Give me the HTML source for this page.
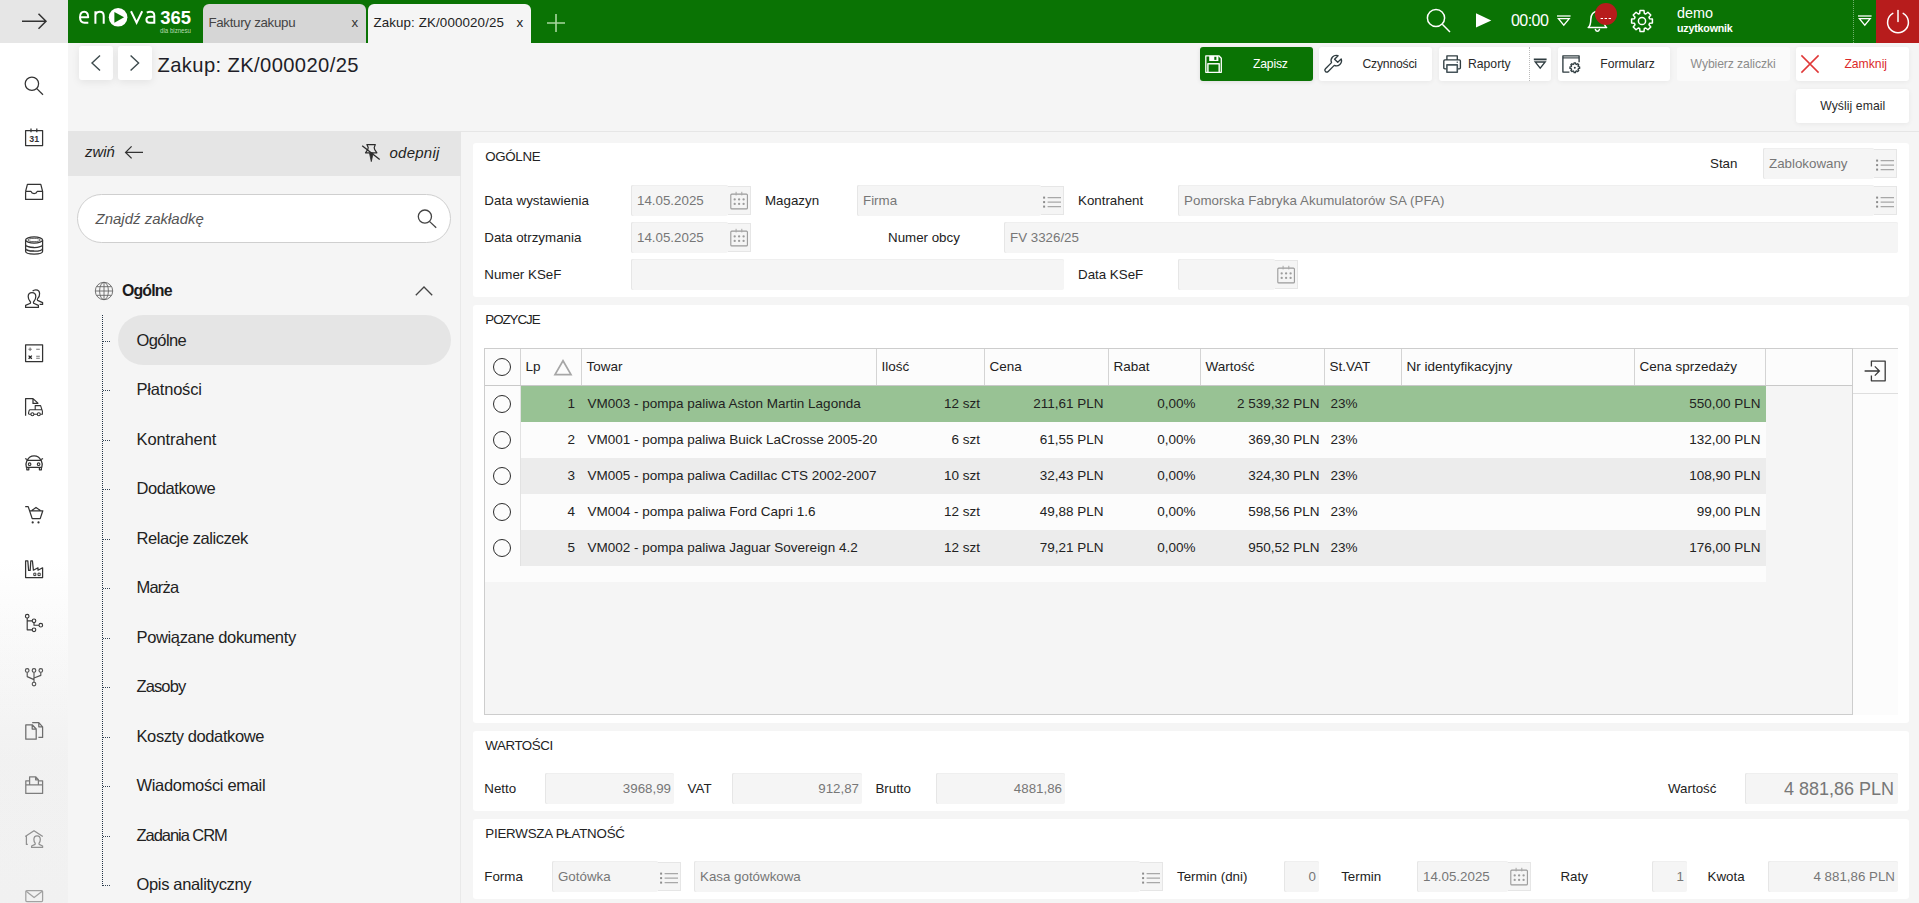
<!DOCTYPE html>
<html lang="pl">
<head>
<meta charset="utf-8">
<title>Zakup: ZK/000020/25</title>
<style>
html,body{margin:0;padding:0}
body{width:1919px;height:903px;overflow:hidden;position:relative;background:#f5f5f5;font-family:"Liberation Sans",sans-serif;font-size:13.33px;color:#222}
.a{position:absolute}
.t{position:absolute;white-space:nowrap;line-height:1}
svg{position:absolute;overflow:visible}
.ic{fill:none;stroke:#3a3a3a;stroke-width:1.4;stroke-linecap:round;stroke-linejoin:round}
/* sidebar */
#sb{left:0;top:0;width:68px;height:903px;background:linear-gradient(#fff 0,#fff 560px,#f1f1f1 760px,#f0f0f0 903px)}
#sbtop{left:0;top:0;width:68px;height:43px;background:#e6e6e6}
#sbfade{left:0;top:600px;width:68px;height:303px;background:linear-gradient(rgba(245,245,245,0),rgba(243,243,243,.35))}
/* top bar */
#bar{left:68px;top:0;width:1851px;height:43px;background:#0a7304}
.tab{top:4px;height:39px;border-radius:6px 6px 0 0}
.tab .t{top:11.8px}
#pwr{left:1876px;top:0;width:43px;height:43px;background:#b71c1c}
/* toolbar */
.btn{top:47px;width:113px;height:34px;background:#fff;border-radius:3px;box-shadow:0 1px 5px rgba(0,0,0,.06)}
.btn .t{font-size:13px;top:10px;color:#2a2a2a}
.nb{top:46px;width:34px;height:34px;background:#fff;border-radius:3px;box-shadow:0 2px 8px rgba(0,0,0,.08)}
/* left panel */
.ni{left:136.5px;font-size:16px;color:#222}
.tick{left:103px;width:7px;height:0;border-top:1px dotted #345}
/* cards */
.card{background:#fff;border-radius:3px;left:473px;width:1436px}
.h{left:485.3px;color:#222}
.l{font-size:13.33px;color:#222}
.f{background:#f5f5f5;height:31px;border-radius:2px;box-shadow:inset 1px 0 0 #e6e6e6,inset 0 1px 0 #efefef;box-sizing:border-box}
.f .t{top:8.6px;left:6px;color:#777;font-size:13.33px}
.f .r{left:auto;right:3px}
.fb{height:29px;width:23px;background:#f5f5f5;border:1px solid #e6e6e6;border-left:none;box-sizing:border-box}
.circ{left:493px;width:18px;height:18px;box-sizing:border-box;border:1.5px solid #2c2c2c;border-radius:50%;background:#fcfcfc}
</style>
</head>
<body>
<!-- SIDEBAR -->
<div id="sb" class="a"></div>
<div id="sbtop" class="a"></div>
<svg style="left:22px;top:12px" width="26" height="18" viewBox="0 0 26 18"><path d="M0 9.3H24M16.5 1.8L24 9.3L16.5 16.8" fill="none" stroke="#333" stroke-width="1.5"/></svg>
<svg style="left:0;top:0" width="68" height="903" viewBox="0 0 68 903"><g class="ic" style="stroke:#333;stroke-width:1.25;stroke-linecap:butt">
<!-- search --><circle cx="31.9" cy="83.7" r="6.7"/><path d="M36.8 88.6L43 94.8"/>
<!-- calendar --><path d="M25.6 130.6H42.6V145.6H25.6Z"/><path d="M31 128.4V132.2M36.8 128.4V132.2"/>
<!-- inbox --><path d="M25.6 191.4L27.4 184.4H40.8L42.6 191.4V199.4H25.6V191.4H31C31.4 192.8 32.4 193.6 34.1 193.6C35.8 193.6 36.8 192.8 37.2 191.4H42.6"/>
<!-- coins --><ellipse cx="34.1" cy="240" rx="8.5" ry="3.1"/><ellipse cx="34.1" cy="240" rx="6.2" ry="1.7" stroke-width=".8"/><path d="M25.6 240V244.4C25.6 246.2 29.4 247.6 34.1 247.6C38.8 247.6 42.6 246.2 42.6 244.4V240M25.6 244.4V248.2C25.6 250 29.4 251.2 34.1 251.2C38.8 251.2 42.6 250 42.6 248.2V244.4M25.6 248.2V251.2C25.6 253 29.4 254 34.1 254C38.8 254 42.6 253 42.6 251.2V248.2"/><path d="M27 246.2C29 247 31.4 247.2 34.1 247.2M27 249.8C29 250.6 31.4 250.8 34.1 250.8" stroke-width=".7"/>
<!-- people --><path d="M25.6 307.4V305.4L30.4 303.2C30.8 302.4 30.6 301.8 30 301.2C28.8 300 28.2 298.4 28.2 296.6C28.2 294 29.8 292.6 32 292.6C34.2 292.6 35.8 294 35.8 296.6C35.8 298.4 35.2 300 34 301.2C33.4 301.8 33.2 302.4 33.6 303.2L38.4 305.4V307.4Z"/><path d="M32.6 291.2C33.4 290.2 34.6 289.8 35.8 289.8C38.2 289.8 39.6 291.4 39.6 293.8C39.6 295.6 39 297.2 37.8 298.4C37.2 299 37.2 299.8 37.6 300.4L42.6 302.6V304.4H39.6"/>
<!-- calculator --><path d="M25.6 344.8H42.6V361.6H25.6Z"/>
<path d="M28.4 349.2H31.8M30.1 347.5V350.9M36.2 349.2H39.8M36.2 356.2H39.8M36.2 358.2H39.8" stroke="#777" stroke-width="1.1"/><path d="M28.6 355.6L31.8 358.8M31.8 355.6L28.6 358.8" stroke="#222" stroke-width="1.3"/>
<!-- doc truck --><path d="M25.6 415.8V398.6H33L38.2 403.4M33 398.6V403.4H38.4"/><path d="M35.2 409.8V405.6H40.6L42.4 411.2V414.2H40.4M37.2 414.2H34M30.8 414.2H29.2C28.6 414.2 28.4 413.6 28.6 413L29 410.8C29.2 410.2 29.6 409.8 30.2 409.8H42" stroke-width="1.1"/><circle cx="32.4" cy="414.2" r="1.5" stroke-width="1.1"/><circle cx="38.8" cy="414.2" r="1.5" stroke-width="1.1"/>
<!-- car --><path d="M27.4 460.2C28.6 457.2 30.6 455.9 34.1 455.9C37.6 455.9 39.6 457.2 40.8 460.2M26.4 467.4C26 466 26 462.4 27 460.4H41.2C42.2 462.4 42.2 466 41.8 467.4Z M26.8 467.4V469.8H28.8V467.4M39.4 467.4V469.8H41.4V467.4M25.2 458.4L27 459.6M43 458.4L41.2 459.6"/><circle cx="29.6" cy="464.2" r="1.3" stroke-width="1.1"/><circle cx="38.6" cy="464.2" r="1.3" stroke-width="1.1"/>
<!-- cart --><path d="M25.2 506.6H28.2L32.2 518.6H40.2L42.8 510.8H30M31.8 510.6L36 507.4L40.4 510.6"/><circle cx="32.7" cy="522.4" r="1.1" fill="#333" stroke="none"/><circle cx="38.5" cy="522.4" r="1.1" fill="#333" stroke="none"/>
<!-- factory --><path d="M25.6 577.6V560.8H27.8L28.6 570.4H30.2L30.8 560.8H32.4L33.4 570.2L38 567.8V570.2L42.6 567.8V577.6Z"/><path d="M33.8 573.2H35.8V575.6H33.8ZM38 573.2H40.2V575.6H38Z" stroke-width="1"/>
<!-- tree --><g stroke-width="1.15"><circle cx="27.2" cy="616.2" r="1.8"/><circle cx="34" cy="620.8" r="1.8"/><circle cx="40.8" cy="625.2" r="1.8"/><circle cx="34" cy="629.8" r="1.8"/><path d="M27.2 618V629.8H32.2M27.2 620.8H32.2M34 622.6V625.2H39"/></g>
<!-- merge --><g stroke-width="1.15" stroke="#444"><circle cx="27.2" cy="670.4" r="1.8"/><circle cx="34" cy="670.4" r="1.8"/><circle cx="40.8" cy="670.4" r="1.8"/><circle cx="34" cy="684" r="1.8"/><path d="M27.2 672.2V676.6L34 679.6M40.8 672.2V675.4L34 678M34 672.2V682.2"/></g>
<!-- copy --><g stroke="#555"><path d="M25.8 724.8H32.2L36.2 729V739.2H25.8ZM32.2 724.8V729H36.2"/><path d="M32.2 722.6H38.8L42.6 726.8V737.4H38.4M38.8 722.6V726.8H42.6"/></g>
<!-- box --><g stroke="#5c5c5c"><path d="M29.6 780.8H25.8V793.4H42.6V780.8H38.4M25.8 784.8H42.6M29.6 784.6V776.8H35.6L38.4 779.8V784.6M35.6 776.8V779.8H38.4"/></g>
<!-- house --><g stroke="#6a6a6a"><path d="M25.2 836.6L34 830.8L42.8 836.6M26.4 836V844.4H27.8"/><path d="M31.6 847.4V846L35 844.4C35.4 843.8 35.4 843.4 35 842.8C34.2 841.8 33.9 840.6 33.9 839.4C33.9 837.2 35.2 835.8 37.1 835.8C39 835.8 40.3 837.2 40.3 839.4C40.3 840.6 40 841.8 39.2 842.8C38.8 843.4 38.8 843.8 39.2 844.4L42.6 846V847.4Z"/></g>
<!-- mail --><g stroke="#777"><rect x="25.8" y="890.6" width="16.8" height="11" rx="1"/><path d="M26.2 891.2L34.1 897.6L42.2 891.2"/></g>
</g>
<text x="29.3" y="142.2" font-family="Liberation Sans" font-weight="700" font-size="9.4" fill="#333" textLength="9.8" lengthAdjust="spacingAndGlyphs">31</text>
</svg>

<div id="sbfade" class="a"></div>
<!-- TOP BAR -->
<div id="bar" class="a"></div>
<svg style="left:68px;top:0" width="135" height="43" viewBox="68 0 135 43">
 <g fill="none" stroke="#fff" stroke-width="2" stroke-linejoin="round" stroke-linecap="butt">
  <path d="M80.2 17.2H88.2C88.2 13.6 86.8 11.7 84.2 11.7C81.4 11.7 80 13.9 80 17.2C80 20.7 81.4 22.7 84.6 22.7H88.3"/>
  <path d="M95.4 23.7V11.2M95.4 14.6C96.4 12.6 97.9 11.7 99.8 11.7C102.4 11.7 103.7 13.2 103.7 16V23.7"/>
  <path d="M131 11.2L136.6 22.8L142.2 11.2" stroke-linejoin="miter"/>
  <path d="M146.8 12.6C147.8 12 149.2 11.7 150.4 11.7C153 11.7 154.3 13 154.3 15.6V23.7M154.3 16.8H150.6C147.8 16.8 146.4 17.8 146.4 19.8C146.4 21.7 147.6 22.7 149.6 22.7H154.3"/>
 </g>
 <circle cx="118.1" cy="17.3" r="9.3" fill="#fff"/>
 <path d="M114.4 11.9V22.7L124.1 17.3Z" fill="#0a7304"/>
 <text x="160.2" y="23.6" font-family="Liberation Sans" font-weight="700" font-size="17.8" fill="#fff" textLength="30.8" lengthAdjust="spacingAndGlyphs">365</text>
 <text x="160" y="32.8" font-family="Liberation Sans" font-size="6.4" fill="#b9dcb3" textLength="31" lengthAdjust="spacingAndGlyphs">dla biznesu</text>
</svg>

<div class="a tab" style="left:203px;width:163px;background:#d6d6d6"><span class="t" style="left:5.4px;color:#444;font-size:13.33px;letter-spacing:-.3px">Faktury zakupu</span><span class="t" style="left:148.5px;color:#333;font-size:13.33px">x</span></div>
<div class="a tab" style="left:368px;width:163px;background:#f5f5f5"><span class="t" style="left:5.4px;color:#222;font-size:13.33px;letter-spacing:.13px">Zakup: ZK/000020/25</span><span class="t" style="left:148.5px;color:#222;font-size:13.33px">x</span></div>
<svg style="left:546px;top:13px" width="20" height="20" viewBox="0 0 20 20"><path d="M10 1V19M1 10H19" stroke="#a9d7a0" stroke-width="1.6" fill="none"/></svg>

<svg style="left:1424px;top:6px" width="30" height="30" viewBox="1424 6 30 30"><g fill="none" stroke="#fff" stroke-width="1.5"><circle cx="1436" cy="18" r="8.6"/><path d="M1442.3 24.3L1450 32"/></g></svg>
<svg style="left:1476px;top:13px" width="16" height="15" viewBox="0 0 16 15"><path d="M0 .3V14.5L15.3 7.4Z" fill="#fff"/></svg>
<span class="t" style="left:1511px;top:12.5px;font-size:16px;color:#fff;letter-spacing:-.55px">00:00</span>
<svg style="left:1556px;top:15px" width="16" height="12" viewBox="0 0 16 12"><g fill="none" stroke="#fff" stroke-width="1.3"><path d="M1 1H14.6"/><path d="M2.4 3.6H13.2L7.8 10.2Z" stroke-linejoin="miter"/></g></svg>
<svg style="left:1585px;top:6px" width="26" height="28" viewBox="1585 6 26 28"><g fill="none" stroke="#fff" stroke-width="1.5" stroke-linejoin="round" stroke-linecap="round"><path d="M1588.2 27.6C1590.6 25.6 1590.8 23.4 1590.8 19.4C1590.8 14.4 1593.4 11.2 1597.4 11.2C1601.4 11.2 1604 14.4 1604 19.4C1604 23.4 1604.2 25.6 1606.6 27.6Z"/><path d="M1595.4 29.4C1595.8 30.6 1596.5 31.2 1597.4 31.2C1598.3 31.2 1599 30.6 1599.4 29.4"/></g></svg>
<div class="a" style="left:1595px;top:3px;width:22px;height:22px;border-radius:11px;background:#b71c1c"></div>
<svg style="left:1600px;top:17px" width="12" height="3" viewBox="0 0 12 3"><path d="M.6 1.5H3M4.6 1.5H7M8.6 1.5H11" stroke="#fff" stroke-width="1.1"/></svg>
<svg style="left:1630px;top:9px" width="24" height="24" viewBox="-12 -12 24 24"><g fill="none" stroke="#fff" stroke-width="1.5" stroke-linejoin="round"><path d="M-2.33 -7.55L-2.00 -10.41L2.00 -10.41L2.33 -7.55L3.69 -6.99L5.94 -8.78L8.78 -5.94L6.99 -3.69L7.55 -2.33L10.41 -2.00L10.41 2.00L7.55 2.33L6.99 3.69L8.78 5.94L5.94 8.78L3.69 6.99L2.33 7.55L2.00 10.41L-2.00 10.41L-2.33 7.55L-3.69 6.99L-5.94 8.78L-8.78 5.94L-6.99 3.69L-7.55 2.33L-10.41 2.00L-10.41 -2.00L-7.55 -2.33L-6.99 -3.69L-8.78 -5.94L-5.94 -8.78L-3.69 -6.99Z"/><circle r="3.6"/></g></svg>
<span class="t" style="left:1677px;top:6px;font-size:14.4px;color:#fff">demo</span>
<span class="t" style="left:1677px;top:22.5px;font-size:10.7px;font-weight:700;color:#fff;letter-spacing:-.2px">uzytkownik</span>
<div class="a" style="left:1853px;top:0;width:0;height:43px;border-left:1px dotted #6fb06b"></div>
<svg style="left:1857px;top:15px" width="16" height="12" viewBox="0 0 16 12"><g fill="none" stroke="#fff" stroke-width="1.3"><path d="M1 1H14.6"/><path d="M2.4 3.6H13.2L7.8 10.2Z"/></g></svg>

<div id="pwr" class="a"></div>
<svg style="left:1886px;top:10px" width="24" height="24" viewBox="-12 -12 24 24"><g fill="none" stroke="#fff" stroke-width="1.5" stroke-linecap="round"><path d="M-5.2 -8.6A10.4 10.4 0 1 0 5.2 -8.6"/><path d="M0 -11.5V-0.5"/></g></svg>

<!-- TOOLBAR -->
<div class="a nb" style="left:79px"></div><div class="a nb" style="left:118px"></div>
<svg style="left:90px;top:54px" width="12" height="18" viewBox="0 0 12 18"><path d="M10 1.4L2 9L10 16.6" fill="none" stroke="#3d4a4d" stroke-width="1.4"/></svg>
<svg style="left:129px;top:54px" width="12" height="18" viewBox="0 0 12 18"><path d="M1.6 1.4L9.6 9L1.6 16.6" fill="none" stroke="#3d4a4d" stroke-width="1.4"/></svg>
<span class="t" style="left:157.5px;top:54.6px;font-size:20.2px;letter-spacing:.38px;color:#1e1e28">Zakup: ZK/000020/25</span>

<div class="a btn" style="left:1200px;background:#0a7304;box-shadow:0 1px 4px rgba(0,0,0,.1)"><span class="t" style="left:53px;color:#fff;letter-spacing:-.2px;font-size:12.2px;top:11px">Zapisz</span></div>
<svg style="left:1204px;top:54px" width="20" height="20" viewBox="0 0 20 20"><g fill="none" stroke="#fff" stroke-width="1.3" stroke-linejoin="round"><path d="M1.8 1.8H14.9L17.3 4.2V18.3H1.8Z"/><path d="M3.9 18.2V9.7H15.2V18.2" stroke-width="1.5" stroke="#f2f8f1"/></g><rect x="5.2" y="1.9" width="9.2" height="5.1" fill="#fff"/><rect x="10.3" y="2.8" width="2.1" height="3.1" fill="#0a7304"/></svg>

<div class="a btn" style="left:1319px"><span class="t" style="left:43.5px;letter-spacing:-.22px;font-size:12.2px;top:11px">Czynności</span></div>
<svg style="left:1316px;top:47px" width="34" height="34" viewBox="1316 47 34 34"><path transform="translate(1336.3 60.6) rotate(45)" d="M-2.25 -4.69V0.2H2.25V-4.69A5.2 5.2 0 0 1 1.95 4.82V13.4A1.95 1.95 0 0 1 -1.95 13.4V4.82A5.2 5.2 0 0 1 -2.25 -4.69Z" fill="none" stroke="#2f3c40" stroke-width="1.35" stroke-linejoin="round"/></svg>

<div class="a btn" style="left:1439px;width:112px"><span class="t" style="left:29px;font-size:12.2px;top:11px">Raporty</span></div>
<div class="a" style="left:1529px;top:47px;width:0;height:34px;border-left:1px dotted #bbb"></div>
<svg style="left:1442px;top:54px" width="20" height="20" viewBox="0 0 20 20"><g fill="none" stroke="#2f3c40" stroke-width="1.35" stroke-linejoin="round"><path d="M4.9 5.9V1.8H15.3V5.9"/><path d="M4.9 14.9H2.9C2.2 14.9 1.8 14.5 1.8 13.8V7C1.8 6.3 2.2 5.9 2.9 5.9H17.3C18 5.9 18.4 6.3 18.4 7V13.8C18.4 14.5 18 14.9 17.3 14.9H15.3"/><path d="M4.9 10.9H15.3V18.3H4.9Z" stroke-width="1.6" stroke="#46545a"/></g><rect x="14.6" y="7.6" width="1.4" height="1.2" fill="#46545a"/></svg>
<svg style="left:1533px;top:58px" width="15" height="12" viewBox="0 0 15 12"><g fill="none" stroke="#2f3c40" stroke-width="1.3"><path d="M.8 1.4H13.6" stroke-width="1.8"/><path d="M2.2 4H12.2L7.2 10.2Z"/></g></svg>

<div class="a btn" style="left:1558px;width:112px"><span class="t" style="left:42.3px;font-size:12.2px;top:11px;letter-spacing:-.05px">Formularz</span></div>
<svg style="left:1561px;top:54px" width="22" height="21" viewBox="0 0 22 21"><g fill="none" stroke="#2f3c40" stroke-width="1.35" stroke-linejoin="round"><path d="M8.4 18.1H1.9V1.8H18.1V8.3"/><path d="M1.9 3.9H18.1" stroke-width="1.1"/><path d="M12.81 10.13L13.07 8.86L14.53 8.86L14.79 10.13L15.62 10.48L16.71 9.76L17.74 10.79L17.02 11.88L17.37 12.71L18.64 12.97L18.64 14.43L17.37 14.69L17.02 15.52L17.74 16.61L16.71 17.64L15.62 16.92L14.79 17.27L14.53 18.54L13.07 18.54L12.81 17.27L11.98 16.92L10.89 17.64L9.86 16.61L10.58 15.52L10.23 14.69L8.96 14.43L8.96 12.97L10.23 12.71L10.58 11.88L9.86 10.79L10.89 9.76L11.98 10.48Z" stroke-width="1.3"/></g><circle cx="13.8" cy="13.7" r="1" fill="#2f3c40"/></svg>

<div class="a btn" style="left:1677px;background:#fafafa;box-shadow:none"><span class="t" style="left:13.6px;font-size:12.2px;top:11px;color:#8c8c8c;letter-spacing:-.1px">Wybierz zaliczki</span></div>

<div class="a btn" style="left:1796px"><span class="t" style="left:48.4px;font-size:12.2px;top:11px;color:#dc2a2a">Zamknij</span></div>
<svg style="left:1800px;top:54px" width="20" height="20" viewBox="0 0 20 20"><path d="M1.4 1.4L18.6 18.6M18.6 1.4L1.4 18.6" stroke="#e03838" stroke-width="1.5" fill="none"/></svg>

<div class="a btn" style="left:1796px;top:89px"><span class="t" style="left:24.2px;font-size:12.2px;top:11px;letter-spacing:.08px">Wyślij email</span></div>

<!-- PANEL -->
<div class="a" style="left:68px;top:131px;width:1851px;height:1px;background:#e6e6e6"></div>
<div class="a" style="left:68px;top:131px;width:393px;height:45px;background:#e5e5e5"></div>
<div class="a" style="left:460px;top:176px;width:1px;height:727px;background:#e9e9e9"></div>
<span class="t" style="left:85px;top:144.8px;font-size:14.9px;font-style:italic;color:#222">zwiń</span>
<svg style="left:124px;top:145px" width="20" height="15" viewBox="0 0 20 15"><path d="M19 7.4H1.6M7.6 1.4L1.6 7.4L7.6 13.4" fill="none" stroke="#333" stroke-width="1.3"/></svg>
<svg style="left:360px;top:142px" width="22" height="22" viewBox="360 142 22 22"><g fill="none" stroke="#2a2a2a" stroke-width="1.2" stroke-linejoin="round"><path d="M366.9 144.6H375.3L374.2 147.6L374.7 149.7L376.9 152.8H365.5L367.7 149.7L368.2 147.6Z"/><path d="M369.5 153.2H373.1L371.3 161.6Z" fill="#2a2a2a" stroke-width=".8"/><path d="M362.2 145.8L379.7 159.4" stroke-width="1.3"/></g></svg>
<span class="t" style="left:389.5px;top:144.8px;font-size:15px;font-style:italic;color:#222;letter-spacing:.25px">odepnij</span>

<div class="a" style="left:77px;top:194px;width:374px;height:49px;box-sizing:border-box;border:1px solid #cfcfcf;border-radius:25px;background:#fff"></div>
<span class="t" style="left:95.5px;top:211.2px;font-size:15px;font-style:italic;color:#555">Znajdź zakładkę</span>
<svg style="left:416px;top:208px" width="22" height="22" viewBox="416 208 22 22"><g fill="none" stroke="#444" stroke-width="1.3"><circle cx="424.9" cy="216.6" r="6.6"/><path d="M429.7 221.6L436.2 227.8"/></g></svg>

<svg style="left:94px;top:281px" width="20" height="20" viewBox="-10 -10 20 20"><g fill="none" stroke="#666" stroke-width=".9"><circle r="8.7"/><ellipse rx="4.4" ry="8.7"/><path d="M0 -8.7V8.7M-8.7 0H8.7M-7.6 -4.3H7.6M-7.6 4.3H7.6"/></g></svg>
<span class="t" style="left:122px;top:283.1px;font-size:15.9px;font-weight:700;color:#1c1c1c;letter-spacing:-.85px">Ogólne</span>
<svg style="left:414px;top:285px" width="20" height="12" viewBox="0 0 20 12"><path d="M1.8 10.2L10 2L18.2 10.2" fill="none" stroke="#444" stroke-width="1.3"/></svg>
<div class="a" style="left:118px;top:315px;width:333px;height:50px;border-radius:25px;background:#e5e5e5"></div>
<div class="a" style="left:102px;top:315px;width:0;height:571px;border-left:1px dotted #234"></div>
<div class="a tick" style="top:340.5px"></div><span class="t ni" style="top:331.5px;font-size:16.5px;letter-spacing:-0.586px">Ogólne</span>
<div class="a tick" style="top:390.0px"></div><span class="t ni" style="top:381.0px;font-size:16.5px;letter-spacing:-0.195px">Płatności</span>
<div class="a tick" style="top:439.5px"></div><span class="t ni" style="top:430.5px;font-size:16.5px;letter-spacing:-0.103px">Kontrahent</span>
<div class="a tick" style="top:489.0px"></div><span class="t ni" style="top:480.0px;font-size:16.5px;letter-spacing:-0.407px">Dodatkowe</span>
<div class="a tick" style="top:538.5px"></div><span class="t ni" style="top:529.5px;font-size:16.5px;letter-spacing:-0.431px">Relacje zaliczek</span>
<div class="a tick" style="top:588.0px"></div><span class="t ni" style="top:579.0px;font-size:16.5px;letter-spacing:-0.809px">Marża</span>
<div class="a tick" style="top:637.5px"></div><span class="t ni" style="top:628.5px;font-size:16.5px;letter-spacing:-0.353px">Powiązane dokumenty</span>
<div class="a tick" style="top:687.0px"></div><span class="t ni" style="top:678.0px;font-size:16.5px;letter-spacing:-0.885px">Zasoby</span>
<div class="a tick" style="top:736.5px"></div><span class="t ni" style="top:727.5px;font-size:16.5px;letter-spacing:-0.401px">Koszty dodatkowe</span>
<div class="a tick" style="top:786.0px"></div><span class="t ni" style="top:777.0px;font-size:16.5px;letter-spacing:-0.317px">Wiadomości email</span>
<div class="a tick" style="top:835.5px"></div><span class="t ni" style="top:826.5px;font-size:16.5px;letter-spacing:-1.054px">Zadania CRM</span>
<div class="a tick" style="top:885.0px"></div><span class="t ni" style="top:876.0px;font-size:16.5px;letter-spacing:-0.34px">Opis analityczny</span>


<!-- MAIN -->
<div class="a card" style="top:143px;height:154px"></div>
<span class="t h" style="top:150.4px;font-size:13.3px;letter-spacing:-0.334px">OGÓLNE</span>
<span class="t l" style="left:1710px;top:156.7px">Stan</span>
<div class="a f" style="left:1763px;top:148px;width:111px;height:31px"><span class="t" style="">Zablokowany</span></div>
<div class="a fb" style="left:1874px;top:149px"></div>
<svg style="left:1874px;top:148.5px" width="24" height="30" viewBox="0 0 24 30"><g stroke="#a8a8a8" stroke-width="1.1" fill="none"><path d="M6.6 11.6H20M6.6 16.1H20M6.6 20.6H20"/></g><g fill="#8c8c8c"><rect x="2.1" y="10.6" width="2" height="2"/><rect x="2.1" y="15.1" width="2" height="2"/><rect x="2.1" y="19.6" width="2" height="2"/></g></svg>
<span class="t l" style="left:484.3px;top:193.8px;letter-spacing:.06px">Data wystawienia</span>
<div class="a f" style="left:631px;top:185px;width:97px;height:31px"><span class="t" style="">14.05.2025</span></div>
<div class="a fb" style="left:728px;top:186px"></div>
<svg style="left:728px;top:185.5px" width="24" height="30" viewBox="0 0 24 30"><g fill="none" stroke="#9a9a9a" stroke-width="1.1"><rect x="2.8" y="8.1" width="16.6" height="14.8" rx="1"/><path d="M8.1 5.8V9.4M13.8 5.8V9.4" stroke="#a6a6a6" stroke-width="1"/></g><g fill="#9c9c9c"><circle cx="6.7" cy="13.4" r="1.15"/><circle cx="11.1" cy="13.4" r="1.15"/><circle cx="15.6" cy="13.4" r="1.15"/><circle cx="6.7" cy="17.9" r="1.15"/><circle cx="11.1" cy="17.9" r="1.15"/><circle cx="15.6" cy="17.9" r="1.15"/></g></svg>
<span class="t l" style="left:765px;top:193.8px">Magazyn</span>
<div class="a f" style="left:857px;top:185px;width:184px;height:31px"><span class="t" style="">Firma</span></div>
<div class="a fb" style="left:1041px;top:186px"></div>
<svg style="left:1041px;top:185.5px" width="24" height="30" viewBox="0 0 24 30"><g stroke="#a8a8a8" stroke-width="1.1" fill="none"><path d="M6.6 11.6H20M6.6 16.1H20M6.6 20.6H20"/></g><g fill="#8c8c8c"><rect x="2.1" y="10.6" width="2" height="2"/><rect x="2.1" y="15.1" width="2" height="2"/><rect x="2.1" y="19.6" width="2" height="2"/></g></svg>
<span class="t l" style="left:1078px;top:193.8px">Kontrahent</span>
<div class="a f" style="left:1178px;top:185px;width:696px;height:31px"><span class="t" style="letter-spacing:0.07px;">Pomorska Fabryka Akumulatorów SA (PFA)</span></div>
<div class="a fb" style="left:1874px;top:186px"></div>
<svg style="left:1874px;top:185.5px" width="24" height="30" viewBox="0 0 24 30"><g stroke="#a8a8a8" stroke-width="1.1" fill="none"><path d="M6.6 11.6H20M6.6 16.1H20M6.6 20.6H20"/></g><g fill="#8c8c8c"><rect x="2.1" y="10.6" width="2" height="2"/><rect x="2.1" y="15.1" width="2" height="2"/><rect x="2.1" y="19.6" width="2" height="2"/></g></svg>
<span class="t l" style="left:484.3px;top:230.8px">Data otrzymania</span>
<div class="a f" style="left:631px;top:222px;width:97px;height:31px"><span class="t" style="">14.05.2025</span></div>
<div class="a fb" style="left:728px;top:223px"></div>
<svg style="left:728px;top:222.5px" width="24" height="30" viewBox="0 0 24 30"><g fill="none" stroke="#9a9a9a" stroke-width="1.1"><rect x="2.8" y="8.1" width="16.6" height="14.8" rx="1"/><path d="M8.1 5.8V9.4M13.8 5.8V9.4" stroke="#a6a6a6" stroke-width="1"/></g><g fill="#9c9c9c"><circle cx="6.7" cy="13.4" r="1.15"/><circle cx="11.1" cy="13.4" r="1.15"/><circle cx="15.6" cy="13.4" r="1.15"/><circle cx="6.7" cy="17.9" r="1.15"/><circle cx="11.1" cy="17.9" r="1.15"/><circle cx="15.6" cy="17.9" r="1.15"/></g></svg>
<span class="t l" style="left:888px;top:230.8px">Numer obcy</span>
<div class="a f" style="left:1004px;top:222px;width:894px;height:31px"><span class="t" style="">FV 3326/25</span></div>
<span class="t l" style="left:484.3px;top:267.8px">Numer KSeF</span>
<div class="a f" style="left:631px;top:259px;width:433px;height:31px"></div>
<span class="t l" style="left:1078px;top:267.8px">Data KSeF</span>
<div class="a f" style="left:1178px;top:259px;width:97px;height:31px"></div>
<div class="a fb" style="left:1275px;top:260px"></div>
<svg style="left:1275px;top:259.5px" width="24" height="30" viewBox="0 0 24 30"><g fill="none" stroke="#9a9a9a" stroke-width="1.1"><rect x="2.8" y="8.1" width="16.6" height="14.8" rx="1"/><path d="M8.1 5.8V9.4M13.8 5.8V9.4" stroke="#a6a6a6" stroke-width="1"/></g><g fill="#9c9c9c"><circle cx="6.7" cy="13.4" r="1.15"/><circle cx="11.1" cy="13.4" r="1.15"/><circle cx="15.6" cy="13.4" r="1.15"/><circle cx="6.7" cy="17.9" r="1.15"/><circle cx="11.1" cy="17.9" r="1.15"/><circle cx="15.6" cy="17.9" r="1.15"/></g></svg>
<div class="a card" style="top:305px;height:418px"></div>
<span class="t h" style="top:312.6px;font-size:13.3px;letter-spacing:-1.018px">POZYCJE</span>
<div class="a" style="left:484px;top:348px;width:1369px;height:367px;box-sizing:border-box;border:1px solid #cdcdcd;background:#f5f5f5"></div>
<div class="a" style="left:485px;top:349px;width:1367px;height:36px;background:#fcfcfc"></div>
<div class="a" style="left:485px;top:385px;width:35px;height:197px;background:#fcfcfc"></div>
<div class="a" style="left:520px;top:385px;width:1px;height:181px;background:#e2e2e2"></div>
<div class="a" style="left:521px;top:386px;width:1245px;height:36px;background:#98c294"></div>
<span class="t" style="top:396.5px;font-size:13.5px;color:#222;right:1344px">1</span>
<span class="t" style="top:396.5px;font-size:13.5px;color:#222;left:587.5px">VM003 - pompa paliwa Aston Martin Lagonda</span>
<span class="t" style="top:396.5px;font-size:13.5px;color:#222;right:939px">12 szt</span>
<span class="t" style="top:396.5px;font-size:13.5px;color:#222;right:815.4000000000001px">211,61 PLN</span>
<span class="t" style="top:396.5px;font-size:13.5px;color:#222;right:723.4000000000001px">0,00%</span>
<span class="t" style="top:396.5px;font-size:13.5px;color:#222;right:599.4000000000001px">2 539,32 PLN</span>
<span class="t" style="top:396.5px;font-size:13.5px;color:#222;left:1330.4px">23%</span>
<span class="t" style="top:396.5px;font-size:13.5px;color:#222;right:158.4000000000001px">550,00 PLN</span>
<div class="a circ" style="top:395px"></div>
<div class="a" style="left:521px;top:422px;width:1245px;height:36px;background:#fcfcfc"></div>
<span class="t" style="top:432.5px;font-size:13.5px;color:#222;right:1344px">2</span>
<span class="t" style="top:432.5px;font-size:13.5px;color:#222;left:587.5px">VM001 - pompa paliwa Buick LaCrosse 2005-20</span>
<span class="t" style="top:432.5px;font-size:13.5px;color:#222;right:939px">6 szt</span>
<span class="t" style="top:432.5px;font-size:13.5px;color:#222;right:815.4000000000001px">61,55 PLN</span>
<span class="t" style="top:432.5px;font-size:13.5px;color:#222;right:723.4000000000001px">0,00%</span>
<span class="t" style="top:432.5px;font-size:13.5px;color:#222;right:599.4000000000001px">369,30 PLN</span>
<span class="t" style="top:432.5px;font-size:13.5px;color:#222;left:1330.4px">23%</span>
<span class="t" style="top:432.5px;font-size:13.5px;color:#222;right:158.4000000000001px">132,00 PLN</span>
<div class="a circ" style="top:431px"></div>
<div class="a" style="left:521px;top:458px;width:1245px;height:36px;background:#ececec"></div>
<span class="t" style="top:468.5px;font-size:13.5px;color:#222;right:1344px">3</span>
<span class="t" style="top:468.5px;font-size:13.5px;color:#222;left:587.5px">VM005 - pompa paliwa Cadillac CTS 2002-2007</span>
<span class="t" style="top:468.5px;font-size:13.5px;color:#222;right:939px">10 szt</span>
<span class="t" style="top:468.5px;font-size:13.5px;color:#222;right:815.4000000000001px">32,43 PLN</span>
<span class="t" style="top:468.5px;font-size:13.5px;color:#222;right:723.4000000000001px">0,00%</span>
<span class="t" style="top:468.5px;font-size:13.5px;color:#222;right:599.4000000000001px">324,30 PLN</span>
<span class="t" style="top:468.5px;font-size:13.5px;color:#222;left:1330.4px">23%</span>
<span class="t" style="top:468.5px;font-size:13.5px;color:#222;right:158.4000000000001px">108,90 PLN</span>
<div class="a circ" style="top:467px"></div>
<div class="a" style="left:521px;top:494px;width:1245px;height:36px;background:#fcfcfc"></div>
<span class="t" style="top:504.5px;font-size:13.5px;color:#222;right:1344px">4</span>
<span class="t" style="top:504.5px;font-size:13.5px;color:#222;left:587.5px">VM004 - pompa paliwa Ford Capri 1.6</span>
<span class="t" style="top:504.5px;font-size:13.5px;color:#222;right:939px">12 szt</span>
<span class="t" style="top:504.5px;font-size:13.5px;color:#222;right:815.4000000000001px">49,88 PLN</span>
<span class="t" style="top:504.5px;font-size:13.5px;color:#222;right:723.4000000000001px">0,00%</span>
<span class="t" style="top:504.5px;font-size:13.5px;color:#222;right:599.4000000000001px">598,56 PLN</span>
<span class="t" style="top:504.5px;font-size:13.5px;color:#222;left:1330.4px">23%</span>
<span class="t" style="top:504.5px;font-size:13.5px;color:#222;right:158.4000000000001px">99,00 PLN</span>
<div class="a circ" style="top:503px"></div>
<div class="a" style="left:521px;top:530px;width:1245px;height:36px;background:#ececec"></div>
<span class="t" style="top:540.5px;font-size:13.5px;color:#222;right:1344px">5</span>
<span class="t" style="top:540.5px;font-size:13.5px;color:#222;left:587.5px">VM002 - pompa paliwa Jaguar Sovereign 4.2</span>
<span class="t" style="top:540.5px;font-size:13.5px;color:#222;right:939px">12 szt</span>
<span class="t" style="top:540.5px;font-size:13.5px;color:#222;right:815.4000000000001px">79,21 PLN</span>
<span class="t" style="top:540.5px;font-size:13.5px;color:#222;right:723.4000000000001px">0,00%</span>
<span class="t" style="top:540.5px;font-size:13.5px;color:#222;right:599.4000000000001px">950,52 PLN</span>
<span class="t" style="top:540.5px;font-size:13.5px;color:#222;left:1330.4px">23%</span>
<span class="t" style="top:540.5px;font-size:13.5px;color:#222;right:158.4000000000001px">176,00 PLN</span>
<div class="a circ" style="top:539px"></div>
<div class="a" style="left:485px;top:566px;width:1281px;height:16px;background:#fcfcfc"></div>
<div class="a" style="left:520px;top:349px;width:1px;height:36px;background:#d4d4d4"></div>
<div class="a" style="left:581px;top:349px;width:1px;height:36px;background:#d4d4d4"></div>
<div class="a" style="left:876px;top:349px;width:1px;height:36px;background:#d4d4d4"></div>
<div class="a" style="left:984px;top:349px;width:1px;height:36px;background:#d4d4d4"></div>
<div class="a" style="left:1108px;top:349px;width:1px;height:36px;background:#d4d4d4"></div>
<div class="a" style="left:1200px;top:349px;width:1px;height:36px;background:#d4d4d4"></div>
<div class="a" style="left:1324px;top:349px;width:1px;height:36px;background:#d4d4d4"></div>
<div class="a" style="left:1401px;top:349px;width:1px;height:36px;background:#d4d4d4"></div>
<div class="a" style="left:1634px;top:349px;width:1px;height:36px;background:#d4d4d4"></div>
<div class="a" style="left:1765px;top:349px;width:1px;height:36px;background:#d4d4d4"></div>
<div class="a" style="left:485px;top:385px;width:1367px;height:1px;background:#c9c9c9"></div>
<span class="t" style="left:525.5px;top:359.7px;font-size:13.5px;color:#222">Lp</span>
<span class="t" style="left:586.5px;top:359.7px;font-size:13.5px;color:#222">Towar</span>
<span class="t" style="left:881.5px;top:359.7px;font-size:13.5px;color:#222">Ilość</span>
<span class="t" style="left:989.5px;top:359.7px;font-size:13.5px;color:#222">Cena</span>
<span class="t" style="left:1113.5px;top:359.7px;font-size:13.5px;color:#222">Rabat</span>
<span class="t" style="left:1205.5px;top:359.7px;font-size:13.5px;color:#222">Wartość</span>
<span class="t" style="left:1329.5px;top:359.7px;font-size:13.5px;color:#222">St.VAT</span>
<span class="t" style="left:1406.5px;top:359.7px;font-size:13.5px;color:#222">Nr identyfikacyjny</span>
<span class="t" style="left:1639.5px;top:359.7px;font-size:13.5px;color:#222">Cena sprzedaży</span>
<div class="a circ" style="top:358px"></div>
<svg style="left:553px;top:359px" width="20" height="17" viewBox="0 0 20 17"><path d="M10 1.8L18 15.6H2Z" fill="none" stroke="#a6a6a6" stroke-width="1.7" stroke-linejoin="miter"/></svg>
<div class="a" style="left:1853px;top:348px;width:45px;height:367px;background:#fcfcfc;border-top:1px solid #d6d6d6;box-sizing:border-box"></div>
<div class="a" style="left:1853px;top:393px;width:45px;height:1px;background:#dedede"></div>
<svg style="left:1863px;top:359px" width="24" height="24" viewBox="0 0 24 24"><g fill="none" stroke="#3a3a3a" stroke-width="1.3" stroke-linejoin="round"><path d="M8.4 7.4V2.2H22.2V21.8H8.4V16.6"/><path d="M1.6 12H16.4M11.8 7.4L16.4 12L11.8 16.6" stroke-linejoin="miter"/></g></svg>
<div class="a card" style="top:731px;height:80px"></div>
<span class="t h" style="top:738.7px;font-size:13.3px;letter-spacing:-0.398px">WARTOŚCI</span>
<span class="t l" style="left:484.3px;top:781.8px">Netto</span>
<div class="a f" style="left:545px;top:773px;width:129px;height:31px"><span class="t r" style="">3968,99</span></div>
<span class="t l" style="left:687.6px;top:781.8px">VAT</span>
<div class="a f" style="left:732px;top:773px;width:130px;height:31px"><span class="t r" style="">912,87</span></div>
<span class="t l" style="left:875.4px;top:781.8px">Brutto</span>
<div class="a f" style="left:936px;top:773px;width:129px;height:31px"><span class="t r" style="">4881,86</span></div>
<span class="t l" style="left:1668px;top:781.8px">Wartość</span>
<div class="a f" style="left:1745px;top:773px;width:153px;height:31px"><span class="t r" style="font-size:18px;top:7.0px;right:4px;">4 881,86 PLN</span></div>
<div class="a card" style="top:819px;height:80px"></div>
<span class="t h" style="top:826.6px;font-size:13.3px;letter-spacing:-0.203px">PIERWSZA PŁATNOŚĆ</span>
<span class="t l" style="left:484.3px;top:869.8px">Forma</span>
<div class="a f" style="left:552px;top:861px;width:106px;height:31px"><span class="t" style="">Gotówka</span></div>
<div class="a fb" style="left:658px;top:862px"></div>
<svg style="left:658px;top:861.5px" width="24" height="30" viewBox="0 0 24 30"><g stroke="#a8a8a8" stroke-width="1.1" fill="none"><path d="M6.6 11.6H20M6.6 16.1H20M6.6 20.6H20"/></g><g fill="#8c8c8c"><rect x="2.1" y="10.6" width="2" height="2"/><rect x="2.1" y="15.1" width="2" height="2"/><rect x="2.1" y="19.6" width="2" height="2"/></g></svg>
<div class="a f" style="left:694px;top:861px;width:446px;height:31px"><span class="t" style="">Kasa gotówkowa</span></div>
<div class="a fb" style="left:1140px;top:862px"></div>
<svg style="left:1140px;top:861.5px" width="24" height="30" viewBox="0 0 24 30"><g stroke="#a8a8a8" stroke-width="1.1" fill="none"><path d="M6.6 11.6H20M6.6 16.1H20M6.6 20.6H20"/></g><g fill="#8c8c8c"><rect x="2.1" y="10.6" width="2" height="2"/><rect x="2.1" y="15.1" width="2" height="2"/><rect x="2.1" y="19.6" width="2" height="2"/></g></svg>
<span class="t l" style="left:1177px;top:869.8px">Termin (dni)</span>
<div class="a f" style="left:1284px;top:861px;width:35px;height:31px"><span class="t r" style="">0</span></div>
<span class="t l" style="left:1341.2px;top:869.8px">Termin</span>
<div class="a f" style="left:1417px;top:861px;width:91px;height:31px"><span class="t" style="">14.05.2025</span></div>
<div class="a fb" style="left:1508px;top:862px"></div>
<svg style="left:1508px;top:861.5px" width="24" height="30" viewBox="0 0 24 30"><g fill="none" stroke="#9a9a9a" stroke-width="1.1"><rect x="2.8" y="8.1" width="16.6" height="14.8" rx="1"/><path d="M8.1 5.8V9.4M13.8 5.8V9.4" stroke="#a6a6a6" stroke-width="1"/></g><g fill="#9c9c9c"><circle cx="6.7" cy="13.4" r="1.15"/><circle cx="11.1" cy="13.4" r="1.15"/><circle cx="15.6" cy="13.4" r="1.15"/><circle cx="6.7" cy="17.9" r="1.15"/><circle cx="11.1" cy="17.9" r="1.15"/><circle cx="15.6" cy="17.9" r="1.15"/></g></svg>
<span class="t l" style="left:1560.4px;top:869.8px">Raty</span>
<div class="a f" style="left:1652px;top:861px;width:35px;height:31px"><span class="t r" style="">1</span></div>
<span class="t l" style="left:1707.5px;top:869.8px">Kwota</span>
<div class="a f" style="left:1768px;top:861px;width:130px;height:31px"><span class="t r" style="">4 881,86 PLN</span></div>
</body>
</html>
